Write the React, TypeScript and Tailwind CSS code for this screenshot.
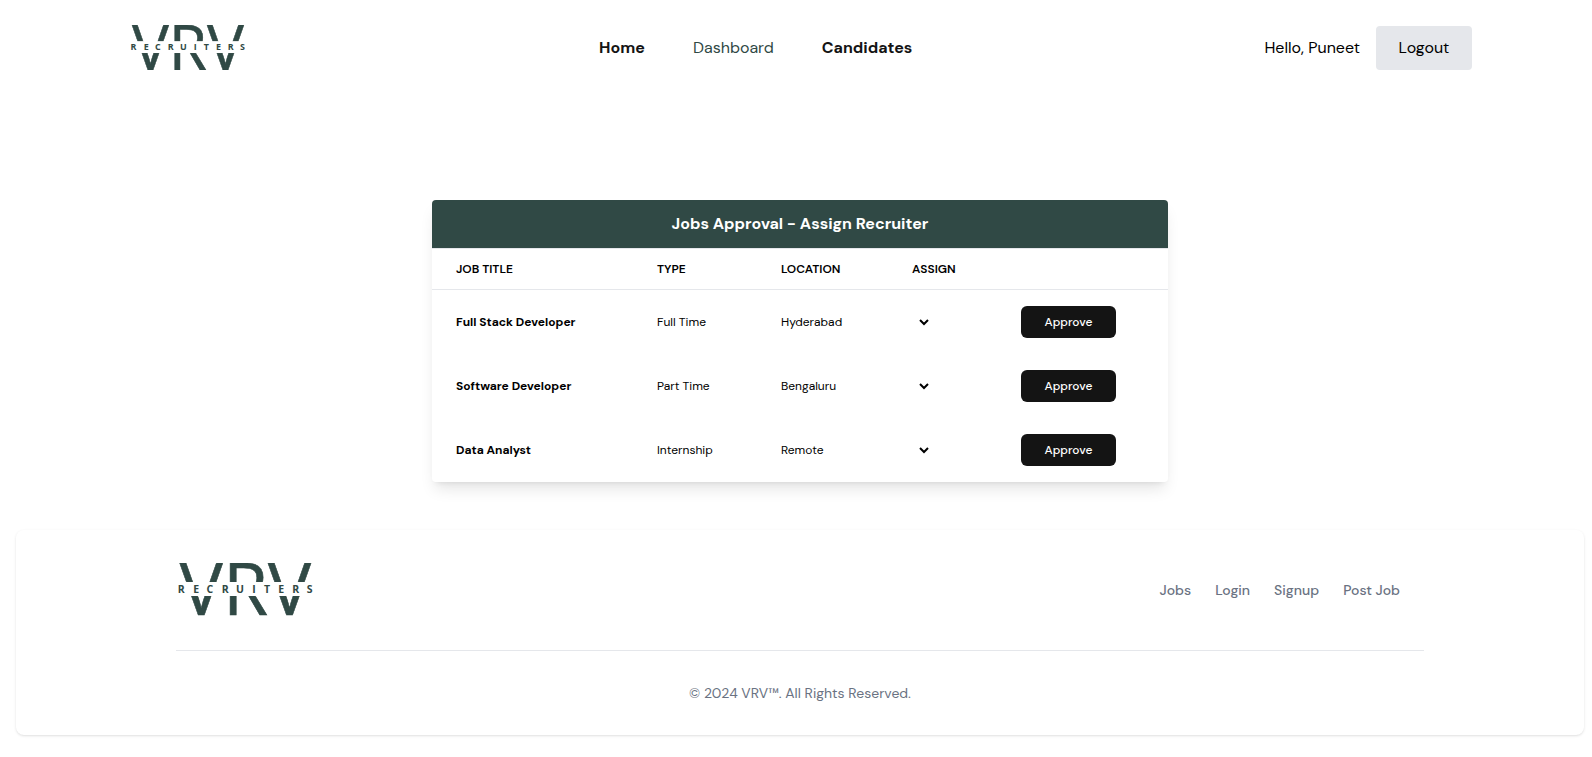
const LETTERS: [string, number][] = [
  ["R", -0.2], ["E", 15.3], ["C", 28.6], ["R", 43.7], ["U", 58.1],
  ["I", 74.3], ["T", 86.1], ["E", 100.3], ["R", 114.3], ["S", 128.8],
];

function Logo({ className }: { className: string }) {
  return (
    <svg viewBox="0 0 136 53" className={className} role="img" aria-label="VRV Recruiters" fontFamily="'Open Sans', sans-serif" fill="#304945">
      <g fontSize="73" fontWeight="500" stroke="#304945" strokeWidth="0.6">
        <text x="1.4" y="52.4">V</text>
        <text x="44.9" y="52.4">R</text>
        <text x="89.8" y="52.4">V</text>
      </g>
      <rect x="0" y="19" width="136" height="14" fill="#fff" />
      <g fontSize="10.5" fontWeight="700">
        {LETTERS.map(([letter, x]) => (
          <text key={x} x={x} y="29.8">{letter}</text>
        ))}
      </g>
    </svg>
  );
}

const JOBS = [
  { title: "Full Stack Developer", type: "Full Time", location: "Hyderabad" },
  { title: "Software Developer", type: "Part Time", location: "Bengaluru" },
  { title: "Data Analyst", type: "Internship", location: "Remote" },
];

const FOOTER_LINKS = ["Jobs", "Login", "Signup", "Post Job"];

export default function App() {
  return (
    <div className="min-h-screen bg-white font-['DM_Sans',Inter,sans-serif] text-black">
      <header className="flex h-24 items-center justify-between px-[120px]">
        <a href="#" className="pb-0.5 pl-2.5">
          <Logo className="h-[45px] w-[117px]" />
        </a>
        <nav className="flex gap-12 text-base text-[#141414]">
          <a href="#" className="font-bold">Home</a>
          <a href="#" className="text-[#304945]">Dashboard</a>
          <a href="#" className="font-bold">Candidates</a>
        </nav>
        <div className="flex items-center gap-4">
          <span>Hello, Puneet</span>
          <button type="button" className="h-11 w-24 rounded bg-gray-200">Logout</button>
        </div>
      </header>

      <main className="pt-[104px] pr-2 pb-12 pl-4">
        <section className="mx-auto max-w-[736px] overflow-hidden rounded shadow-lg">
          <h1 className="bg-[#304945] py-3 text-center text-base font-bold text-white">
            Jobs Approval - Assign Recruiter
          </h1>
          <table className="w-full table-fixed text-left text-xs">
            <colgroup>
              <col className="w-[201px]" />
              <col className="w-[124px]" />
              <col className="w-[131px]" />
              <col className="w-[109px]" />
              <col />
            </colgroup>
            <thead>
              <tr className="h-[41px] border-y border-gray-200 uppercase">
                <th scope="col" className="px-6 font-semibold">Job Title</th>
                <th scope="col" className="px-6 font-semibold">Type</th>
                <th scope="col" className="px-6 font-semibold">Location</th>
                <th scope="col" className="px-6 font-semibold">Assign</th>
                <td />
              </tr>
            </thead>
            <tbody>
              {JOBS.map((job) => (
                <tr key={job.title} className="h-16">
                  <th scope="row" className="pl-6 font-bold whitespace-nowrap">{job.title}</th>
                  <td className="px-6 whitespace-nowrap">{job.type}</td>
                  <td className="px-6 whitespace-nowrap">{job.location}</td>
                  <td className="px-6">
                    <select aria-label={`Recruiter for ${job.title}`} className="h-6 w-5 bg-transparent" />
                  </td>
                  <td className="px-6">
                    <button type="button" className="block h-8 w-[95px] rounded-md bg-[#141414] font-medium text-white">
                      Approve
                    </button>
                  </td>
                </tr>
              ))}
            </tbody>
          </table>
        </section>
      </main>

      <footer className="mr-2 ml-4 rounded-lg shadow-sm">
        <div className="mx-auto max-w-7xl px-4 py-8">
          <div className="flex h-14 items-center justify-between">
            <a href="#" className="pl-0.5">
              <Logo className="h-[53px] w-[136px]" />
            </a>
            <ul className="flex text-sm font-medium text-gray-500">
              {FOOTER_LINKS.map((label) => (
                <li key={label} className="mr-6">
                  <a href="#">{label}</a>
                </li>
              ))}
            </ul>
          </div>
          <hr className="my-8 border-gray-200" />
          <p className="text-center text-sm text-gray-500">© 2024 VRV™. All Rights Reserved.</p>
        </div>
      </footer>
    </div>
  );
}
